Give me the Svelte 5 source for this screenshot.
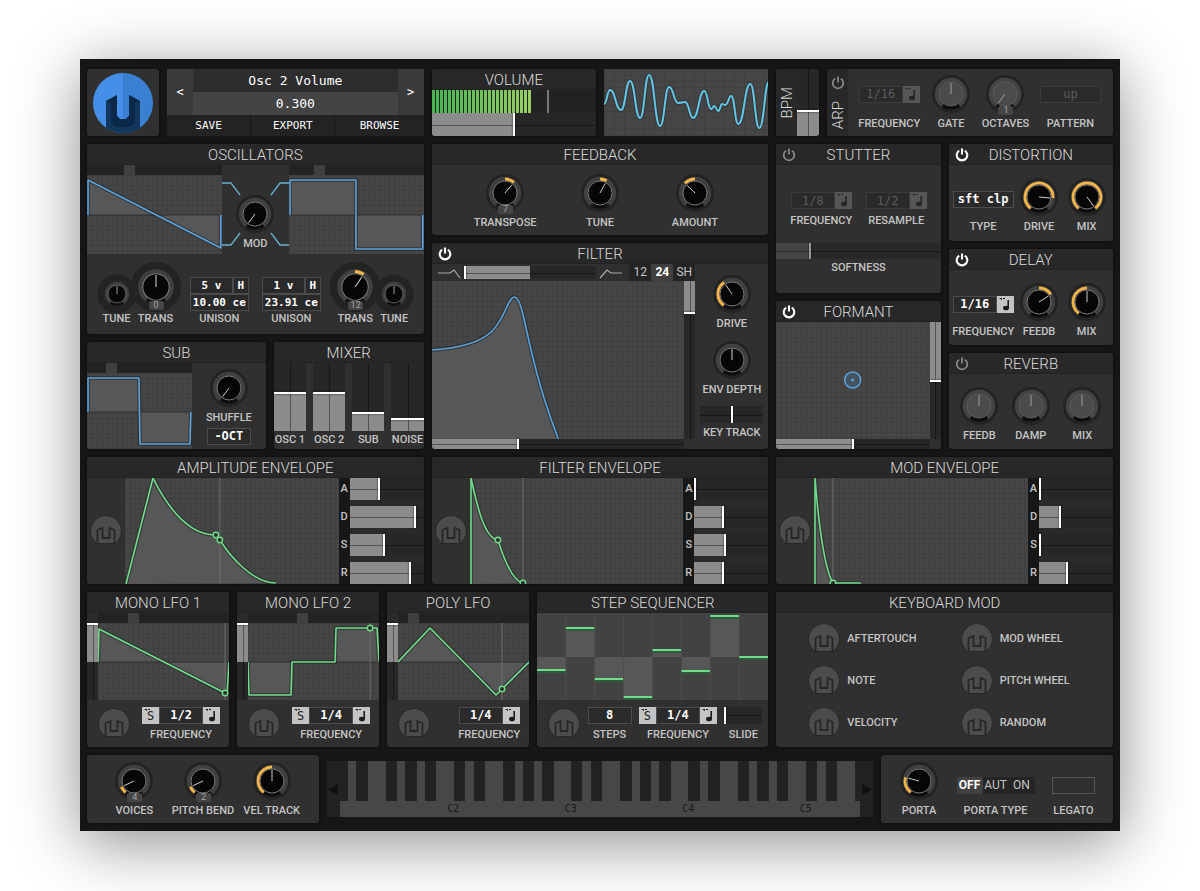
<script lang="ts">
  type Knob = { label: string; value: number; origin?: number; kind?: string; off?: boolean; badge?: string };
  type Slider = { label: string; value: number; from?: number };
  type Wave = {
    w: number;
    h: number;
    d: string;
    close?: string;
    mid?: number;
    play?: number;
    dots?: number[][];
    color?: string;
  };

  let knobs: Record<string, Knob> = $state({
    mod: { label: "MOD", value: 0 },
    tune1: { label: "TUNE", value: 0.5, origin: 0.5, kind: "small" },
    trans1: { label: "TRANS", value: 0.5, origin: 0.5, kind: "large", badge: "0" },
    trans2: { label: "TRANS", value: 0.62, origin: 0.5, kind: "large", badge: "12" },
    tune2: { label: "TUNE", value: 0.5, origin: 0.5, kind: "small" },
    shuffle: { label: "SHUFFLE", value: 0 },
    gate: { label: "GATE", value: 0.5, off: true },
    octaves: { label: "OCTAVES", value: 0, off: true, badge: "1" },
    filterDrive: { label: "DRIVE", value: 0.38 },
    envDepth: { label: "ENV DEPTH", value: 0.5, origin: 0.5 },
    distDrive: { label: "DRIVE", value: 0.83 },
    distMix: { label: "MIX", value: 1 },
    delayFeed: { label: "FEEDB", value: 0.7, origin: 0.5 },
    delayMix: { label: "MIX", value: 0.5 },
    porta: { label: "PORTA", value: 0.24 },
  });

  let feedback: Knob[] = $state([
    { label: "TRANSPOSE", value: 0.64, origin: 0.5, badge: "7" },
    { label: "TUNE", value: 0.6, origin: 0.5 },
    { label: "AMOUNT", value: 0.34, origin: 0.5 },
  ]);

  let reverb: Knob[] = $state([
    { label: "FEEDB", value: 0.5, off: true },
    { label: "DAMP", value: 0.5, off: true },
    { label: "MIX", value: 0.5, off: true },
  ]);

  let voice: Knob[] = $state([
    { label: "VOICES", value: 0.1, badge: "4" },
    { label: "PITCH BEND", value: 0.1, badge: "2" },
    { label: "VEL TRACK", value: 0.5 },
  ]);

  let sliders: Record<string, Slider> = $state({
    volume: { label: "Volume", value: 0.5 },
    bpm: { label: "BPM", value: 0.37 },
    wave1: { label: "Oscillator 1 wave", value: 0.3 },
    wave2: { label: "Oscillator 2 wave", value: 0.2 },
    subWave: { label: "Sub wave", value: 0.2 },
    blend: { label: "Filter blend", value: 0, from: 0.5 },
    resonance: { label: "Resonance", value: 0.8, from: 1 },
    cutoff: { label: "Cutoff", value: 0.34 },
    keyTrack: { label: "KEY TRACK", value: 0.5, from: 0.5 },
    softness: { label: "SOFTNESS", value: 0.2 },
    formantX: { label: "Formant X", value: 0.5 },
    formantY: { label: "Formant Y", value: 0.5, from: 1 },
    slide: { label: "SLIDE", value: 0 },
  });

  let mixer: Slider[] = $state([
    { label: "OSC 1", value: 0.56 },
    { label: "OSC 2", value: 0.56 },
    { label: "SUB", value: 0.26 },
    { label: "NOISE", value: 0.16 },
  ]);

  function adsr(values: number[]): Slider[] {
    return ["A", "D", "S", "R"].map((label, i) => ({ label, value: values[i] }));
  }

  let envelopes = $state([
    {
      title: "AMPLITUDE ENVELOPE",
      stages: adsr([0.4, 0.89, 0.46, 0.82]),
      wave: { w: 214, h: 106, d: "M1,106 L28,0 C42,28 62,57 91,57 L95,62 C105,78 128,105 151,105", play: 95, dots: [[91, 57], [95, 62]] } as Wave,
    },
    {
      title: "FILTER ENVELOPE",
      stages: adsr([0, 0.39, 0.41, 0.38]),
      wave: { w: 214, h: 106, d: "M1,106 L1,0 C8,32 15,60 28,62 C33,78 42,103 53,105", play: 53, dots: [[28, 62], [53, 105]] } as Wave,
    },
    {
      title: "MOD ENVELOPE",
      stages: adsr([0, 0.28, 0, 0.37]),
      wave: { w: 214, h: 106, d: "M1,106 L1,0 C5,50 10,90 19,105 L47,105", play: 19, dots: [[19, 105]] } as Wave,
    },
  ]);

  let lfos = $state([
    {
      title: "MONO LFO 1",
      sync: true,
      rate: "1/2",
      shape: { label: "Shape", value: 0.25 } as Slider,
      amp: { label: "Amplitude", value: 1, from: 0.5 } as Slider,
      wave: { w: 131, h: 77, d: "M0,39 L1,6 L127,70 L129,70 L131,39", mid: 39, play: 127, dots: [[127, 70]] } as Wave,
    },
    {
      title: "MONO LFO 2",
      sync: true,
      rate: "1/4",
      shape: { label: "Shape", value: 0.41 } as Slider,
      amp: { label: "Amplitude", value: 1, from: 0.5 } as Slider,
      wave: { w: 131, h: 77, d: "M0,39 L1,72 L43,72 L44,39 L87,39 L88,5 L129,5 L131,39", mid: 39, play: 122, dots: [[122, 5]] } as Wave,
    },
    {
      title: "POLY LFO",
      sync: false,
      rate: "1/4",
      shape: { label: "Shape", value: 0.08 } as Slider,
      amp: { label: "Amplitude", value: 1, from: 0.5 } as Slider,
      wave: { w: 131, h: 77, d: "M0,39 L32,5 L98,72 L131,39", mid: 39, play: 104, dots: [[104, 66]] } as Wave,
    },
  ]);

  const blue = "#5aa2dc";
  const osc1: Wave = { w: 135, h: 79, d: "M1,40 L1,5 L134,73 L134,40", mid: 40, color: blue };
  const osc2: Wave = { w: 135, h: 79, d: "M1,40 L1,5 L67,5 L67,74 L134,74 L134,40", mid: 40, color: blue };
  const sub: Wave = { w: 105, h: 76, d: "M1,39 L1,5 L52,5 L53,71 L103,71 L104,39", mid: 39, color: blue };
  const filter: Wave = {
    w: 252,
    h: 158,
    d: "M0,69 C30,67 50,60 60,50 C73,37 76,16 82,16 C89,16 92,42 100,74 C106,100 118,137 126,158",
    close: "L0,158 Z",
    color: blue,
  };

  const scope = smooth([
    [0, 35], [6, 21], [17, 41], [26, 12], [36, 49], [45, 6], [56, 57], [65, 18], [74, 34], [81, 33],
    [89, 49], [100, 22], [107, 40], [110, 37], [114, 42], [118, 35], [121, 36], [127, 27], [134, 55],
    [146, 15], [155, 59], [165, 12],
  ]);

  const steps = [57, 15, 66, 84, 37, 58, 3, 44];
  const modSources = ["AFTERTOUCH", "MOD WHEEL", "NOTE", "PITCH WHEEL", "VELOCITY", "RANDOM"];

  // 31 and a bit white keys, both ends cut off by the case
  const whiteKeys = Array.from({ length: 32 }, (_, i) => ({
    grow: i === 0 ? 0.25 : i === 31 ? 0.75 : 1,
    label: i % 7 === 0 && i > 0 ? "C" + (i / 7 + 1) : "",
  }));
  const octaveWidth = 117.5;
  const blackKeys = [0, 1, 2, 3, 4].flatMap((o) =>
    [9, 29, 58.5, 78, 97.5].map((x) => ((o * octaveWidth + x - 12.5) / 521) * 100)
  ).filter((x) => x < 100);

  let filterSlope = $state("24");
  let portaType = $state("OFF");
  let legato = $state(false);

  function smooth(points: number[][]): string {
    let d = `M${points[0]}`;
    for (let i = 1; i < points.length; i++) {
      const [x0, y0] = points[i - 1];
      const [x1, y1] = points[i];
      const mx = (x0 + x1) / 2;
      d += ` C${mx},${y0} ${mx},${y1} ${x1},${y1}`;
    }
    return d;
  }

  function polar(v: number, r: number): string {
    const a = ((v - 0.5) * 288 * Math.PI) / 180;
    return `${(Math.sin(a) * r).toFixed(2)},${(-Math.cos(a) * r).toFixed(2)}`;
  }

  function arc(from: number, to: number, r: number): string {
    const a = Math.min(from, to);
    const b = Math.max(from, to);
    return `M${polar(a, r)} A${r},${r} 0 ${(b - a) * 288 > 180 ? 1 : 0} 1 ${polar(b, r)}`;
  }

  function fillStyle(s: Slider, vertical: boolean): string {
    const from = s.from ?? 0;
    const start = Math.min(from, s.value) * 100;
    const size = Math.abs(s.value - from) * 100;
    return vertical ? `bottom:${start}%;height:${size}%` : `left:${start}%;width:${size}%`;
  }
</script>

{#snippet dial(k: Knob)}
  <span class="knob {k.kind ?? ''}" class:off={k.off}>
    <svg viewBox="-20 -20 40 40" aria-hidden="true">
      <circle class="back" r={k.kind === "large" ? 23 : k.kind === "small" ? 26 : 19} />
      <circle class="well" r="15.5" />
      <path class="ring" d={arc(0, 1, 14)} />
      {#if !k.off && k.value !== (k.origin ?? 0)}
        <path class="amount" d={arc(k.origin ?? 0, k.value, 14)} />
      {/if}
      <circle class="cap" r="12" />
      <path class="pointer" d="M0,0 L{polar(k.value, 11)}" />
    </svg>
    <input type="range" min="0" max="1" step="0.01" aria-label={k.label} bind:value={k.value} />
    {#if k.badge}<span class="badge">{k.badge}</span>{/if}
  </span>
{/snippet}

{#snippet knob(k: Knob)}
  <div class="field">
    <div class="control">{@render dial(k)}</div>
    <span class="caption">{k.label}</span>
  </div>
{/snippet}

{#snippet slider(s: Slider, kind: string)}
  <span class="slider {kind}">
    <span class="fill" style={fillStyle(s, kind.includes("vertical"))}></span>
    <span class="groove"></span>
    <span class="thumb" style="--v:{s.value}"></span>
    <input type="range" min="0" max="1" step="0.01" aria-label={s.label} bind:value={s.value} />
  </span>
{/snippet}

{#snippet wave(p: Wave)}
  <svg class="grid" viewBox="0 0 {p.w} {p.h}" preserveAspectRatio="none" aria-hidden="true">
    <path d="{p.d} {p.close ?? ''}" fill="#575757" />
    {#if p.mid}<path d="M0,{p.mid} H{p.w}" stroke="#303030" />{/if}
    {#if p.play}<path d="M{p.play},0 V{p.h}" stroke="#6e6e6e" />{/if}
    <path d={p.d} fill="none" stroke="#222" stroke-opacity="0.5" stroke-width="4" />
    <path d={p.d} fill="none" stroke={p.color ?? "#6fdc8c"} stroke-width="1.6" stroke-linejoin="round" />
    {#each p.dots ?? [] as [x, y]}
      <circle cx={x} cy={y} r="2.7" fill="#303030" stroke="#6fdc8c" stroke-width="1.4" />
    {/each}
  </svg>
{/snippet}

{#snippet power(name: string, on: boolean)}
  <button class="power" class:on aria-label="{name} power">
    <svg viewBox="0 0 14 14" width="14" height="14">
      <path d="M4.2,2.6 A5.3,5.3 0 1 0 9.8,2.6 M7,0.5 V6.6" fill="none" stroke="currentColor" stroke-width={on ? 2.1 : 1.7} />
    </svg>
  </button>
{/snippet}

{#snippet title(text: string, on?: boolean)}
  <header>
    <span>{#if on !== undefined}{@render power(text, on)}{/if}</span>
    <h2>{text}</h2>
  </header>
{/snippet}

{#snippet modButton(name: string)}
  <button class="mod" aria-label="Modulate with {name}">
    <svg viewBox="-16 -16 32 32">
      <path class="disc" d="M-9,12.5 A15.4,15.4 0 1 1 9,12.5 Z" />
      <path class="mark" d="M-8.5,12.5 V-1 L-3.5,-3 V7 H3.5 V-3 L8.5,-1 V12.5" />
    </svg>
  </button>
{/snippet}

{#snippet note()}
  <button class="icon" aria-label="Tempo mode">
    <svg viewBox="0 0 17 17">
      <path d="M2,2 H5 V4 Z M6,2 H8 V3 H6 Z" fill="currentColor" />
      <path d="M11.2,4 V12" stroke="currentColor" stroke-width="1.6" />
      <ellipse cx="9" cy="12" rx="3" ry="2.3" fill="currentColor" />
    </svg>
  </button>
{/snippet}

{#snippet tempo(value: string, label: string, sync: boolean, off: boolean)}
  <div class="field">
    <div class="control">
      <span class="tempo" class:off>
        {#if sync}
          <button class="icon" aria-label="Sync">
            <svg viewBox="0 0 17 17"><path d="M2,2 H5 V4 Z M6,2 H8 V3 H6 Z" fill="currentColor" /></svg>
            <span>S</span>
          </button>
        {/if}
        <input class="value" type="text" aria-label={label} {value} />
        {@render note()}
      </span>
    </div>
    <span class="caption">{label}</span>
  </div>
{/snippet}

<main>
  <div class="synth">
    <section class="row">
      <div class="patch-area">
        <div class="panel logo">
          <svg viewBox="0 0 62 62" role="img" aria-label="Logo">
            <defs><clipPath id="disc"><circle cx="31" cy="31" r="30" /></clipPath></defs>
            <g clip-path="url(#disc)">
              <path d="M0,0 H31 V62 H0 Z" fill="#4590e6" />
              <path d="M31,0 H62 V62 H31 Z" fill="#3a80d2" />
              <path d="M14,62 V29 L25,23 V44 L28,47 H34 L37,44 V23 L48,29 V62 Z" fill="#12365c" />
              <path d="M14,29 L25,23 V44 L28,47 H34 L37,44 V23 L48,29 L43,31 V51 L38,55 H24 L19,51 V31 Z" fill="#0c2848" />
            </g>
          </svg>
        </div>
        <div class="patch">
          <button class="arrow">&lt;</button>
          <div class="readout">
            <output>Osc 2 Volume</output>
            <output>0.300</output>
          </div>
          <button class="arrow">&gt;</button>
          <div class="actions">
            <button>SAVE</button>
            <button>EXPORT</button>
            <button>BROWSE</button>
          </div>
        </div>
      </div>

      <div class="halves">
        <div class="panel">
          {@render title("VOLUME")}
          <div class="meter"><div class="level"></div><div class="peak"></div></div>
          {@render slider(sliders.volume, "tall")}
        </div>
        <svg class="grid scope" viewBox="0 0 164 67" preserveAspectRatio="none" aria-hidden="true">
          <path d={scope} fill="none" stroke="#222" stroke-opacity="0.4" stroke-width="4" />
          <path d={scope} fill="none" stroke="#62c6e6" stroke-width="2" />
        </svg>
      </div>

      <div class="clock">
        <div class="panel side">
          <div class="side-title"><h2>BPM</h2></div>
          {@render slider(sliders.bpm, "vertical")}
        </div>
        <div class="panel side arp">
          <div class="side-title">{@render power("ARP", false)}<h2>ARP</h2></div>
          <div class="fields">
            {@render tempo("1/16", "FREQUENCY", false, true)}
            {@render knob(knobs.gate)}
            {@render knob(knobs.octaves)}
            <label class="field">
              <span class="control"><input class="value wide off" type="text" value="up" /></span>
              <span class="caption">PATTERN</span>
            </label>
          </div>
        </div>
      </div>
    </section>

    <section class="row">
      <div class="stack">
        <div class="panel">
          {@render title("OSCILLATORS")}
          <div class="oscillators">
            <div class="display">{@render slider(sliders.wave1, "tab")}{@render wave(osc1)}</div>
            <div class="cross">
              <svg viewBox="0 0 67 89" aria-hidden="true">
                <path d="M0,18 H9 L18,30 M67,18 H58 L49,30 M0,80 H9 L18,68 M67,80 H58 L49,68" fill="none" stroke="#68aecd" stroke-width="1.3" />
              </svg>
              {@render knob(knobs.mod)}
            </div>
            <div class="display">{@render slider(sliders.wave2, "tab")}{@render wave(osc2)}</div>
          </div>
          <div class="fields tuning">
            <div class="pair">{@render knob(knobs.tune1)}{@render knob(knobs.trans1)}</div>
            <div class="unisons">
              {#each [["5 v", "10.00 ce"], ["1 v", "23.91 ce"]] as [voices, detune]}
                <div class="field">
                  <div class="unison">
                    <input class="value" type="text" aria-label="Unison voices" value={voices} />
                    <button class="value">H</button>
                    <input class="value detune" type="text" aria-label="Unison detune" value={detune} />
                  </div>
                  <span class="caption">UNISON</span>
                </div>
              {/each}
            </div>
            <div class="pair">{@render knob(knobs.trans2)}{@render knob(knobs.tune2)}</div>
          </div>
        </div>
        <div class="sub-mixer">
          <div class="panel">
            {@render title("SUB")}
            <div class="sub">
              <div class="display">{@render slider(sliders.subWave, "tab")}{@render wave(sub)}</div>
              <div class="sub-side">
                {@render knob(knobs.shuffle)}
                <button class="value">-OCT</button>
              </div>
            </div>
          </div>
          <div class="panel">
            {@render title("MIXER")}
            <div class="mixer">
              {#each mixer as channel}
                <div class="channel">{@render slider(channel, "vertical")}<span class="caption">{channel.label}</span></div>
              {/each}
            </div>
          </div>
        </div>
      </div>

      <div class="stack">
        <div class="panel">
          {@render title("FEEDBACK")}
          <div class="fields even roomy">
            {#each feedback as k}{@render knob(k)}{/each}
          </div>
        </div>
        <div class="panel">
          {@render title("FILTER", true)}
          <div class="filter">
            <div class="filter-main">
              <div class="filter-top">
                <svg viewBox="0 0 24 13" width="24" height="13" aria-hidden="true"><path d="M1,7 H13 L17,4 L23,12" /></svg>
                {@render slider(sliders.blend, "")}
                <svg viewBox="0 0 24 13" width="24" height="13" aria-hidden="true"><path d="M1,12 L8,4 L12,7 H23" /></svg>
                <div class="options slope">
                  {#each ["12", "24", "SH"] as option}
                    <label><input type="radio" name="slope" value={option} bind:group={filterSlope} /><span>{option}</span></label>
                  {/each}
                </div>
              </div>
              <div class="pad">
                {@render wave(filter)}
                {@render slider(sliders.resonance, "vertical")}
                {@render slider(sliders.cutoff, "")}
              </div>
            </div>
            <div class="filter-side">
              {@render knob(knobs.filterDrive)}
              {@render knob(knobs.envDepth)}
              <div class="field">{@render slider(sliders.keyTrack, "free")}<span class="caption">KEY TRACK</span></div>
            </div>
          </div>
        </div>
      </div>

      <div class="halves">
        <div class="stack">
          <div class="panel">
            {@render title("STUTTER", false)}
            <div class="stutter">
              <div class="fields">
                {@render tempo("1/8", "FREQUENCY", false, true)}
                {@render tempo("1/2", "RESAMPLE", false, true)}
              </div>
              <div class="field">{@render slider(sliders.softness, "dim")}<span class="caption">SOFTNESS</span></div>
            </div>
          </div>
          <div class="panel">
            {@render title("FORMANT", true)}
            <div class="pad formant">
              <svg class="grid" viewBox="0 0 154 117" aria-hidden="true">
                <circle cx="77" cy="58" r="8" fill="#46627a" fill-opacity="0.5" stroke={blue} stroke-width="1.5" />
                <circle cx="77" cy="58" r="1.5" fill={blue} />
              </svg>
              {@render slider(sliders.formantY, "vertical")}
              {@render slider(sliders.formantX, "")}
            </div>
          </div>
        </div>
        <div class="stack effects">
          <div class="panel">
            {@render title("DISTORTION", true)}
            <div class="fields tight">
              <label class="field">
                <span class="control"><input class="value wide" type="text" value="sft clp" /></span>
                <span class="caption">TYPE</span>
              </label>
              {@render knob(knobs.distDrive)}
              {@render knob(knobs.distMix)}
            </div>
          </div>
          <div class="panel">
            {@render title("DELAY", true)}
            <div class="fields tight">
              {@render tempo("1/16", "FREQUENCY", false, false)}
              {@render knob(knobs.delayFeed)}
              {@render knob(knobs.delayMix)}
            </div>
          </div>
          <div class="panel">
            {@render title("REVERB", false)}
            <div class="fields even">
              {#each reverb as k}{@render knob(k)}{/each}
            </div>
          </div>
        </div>
      </div>
    </section>

    <section class="row">
      {#each envelopes as env}
        <div class="panel">
          {@render title(env.title)}
          <div class="envelope">
            {@render modButton(env.title)}
            {@render wave(env.wave)}
            <div class="stages">
              {#each env.stages as stage}
                <div class="stage"><span class="caption">{stage.label}</span>{@render slider(stage, "")}</div>
              {/each}
            </div>
          </div>
        </div>
      {/each}
    </section>

    <section class="row">
      <div class="lfos">
        {#each lfos as lfo}
          <div class="panel">
            {@render title(lfo.title)}
            <div class="lfo">
              <span class="corner"></span>
              {@render slider(lfo.shape, "tab")}
              {@render slider(lfo.amp, "vertical")}
              {@render wave(lfo.wave)}
            </div>
            <div class="lfo-bottom">
              {@render modButton(lfo.title)}
              {@render tempo(lfo.rate, "FREQUENCY", lfo.sync, false)}
            </div>
          </div>
        {/each}
        <div class="panel">
          {@render title("STEP SEQUENCER")}
          <svg class="steps" viewBox="0 0 232 87" preserveAspectRatio="none" aria-hidden="true">
            {#each steps as y, i}
              <rect x={i * 29} y={Math.min(y, 44)} width="29" height={Math.abs(y - 44)} fill="#575757" />
              <path d="M{i * 29},0 V87" stroke="#4e4e4e" />
              <path d="M{i * 29},{y + 1} H{i * 29 + 29}" stroke="#2f5a3c" stroke-width="4" />
              <path d="M{i * 29},{y} H{i * 29 + 29}" stroke="#6fdc8c" stroke-width="2" />
            {/each}
          </svg>
          <div class="lfo-bottom sequencer">
            {@render modButton("STEP SEQUENCER")}
            <label class="field">
              <span class="control"><input class="value count" type="text" value="8" /></span>
              <span class="caption">STEPS</span>
            </label>
            {@render tempo("1/4", "FREQUENCY", true, false)}
            <div class="field slide"><div class="control">{@render slider(sliders.slide, "free")}</div><span class="caption">SLIDE</span></div>
          </div>
        </div>
      </div>
      <div class="panel">
        {@render title("KEYBOARD MOD")}
        <div class="sources">
          {#each modSources as source}
            <div class="source">{@render modButton(source)}<span class="caption">{source}</span></div>
          {/each}
        </div>
      </div>
    </section>

    <section class="bottom">
      <div class="panel">
        <div class="fields even">
          {#each voice as k}{@render knob(k)}{/each}
        </div>
      </div>
      <div class="keyboard">
        <button class="shift" aria-label="Octave down"><svg viewBox="0 0 10 10"><path d="M9,0 V10 L0,5 Z" /></svg></button>
        <div class="keys">
          {#each whiteKeys as key}
            <button class="white" style="flex-grow:{key.grow}">{key.label}</button>
          {/each}
          {#each blackKeys as x}
            <button class="black" style="left:{x}%" aria-label="Black key"></button>
          {/each}
        </div>
        <button class="shift" aria-label="Octave up"><svg viewBox="0 0 10 10"><path d="M1,0 V10 L10,5 Z" /></svg></button>
      </div>
      <div class="panel">
        <div class="fields porta">
          {@render knob(knobs.porta)}
          <div class="field">
            <div class="control">
              <div class="options">
                {#each ["OFF", "AUT", "ON"] as option}
                  <label><input type="radio" name="porta" value={option} bind:group={portaType} /><span>{option}</span></label>
                {/each}
              </div>
            </div>
            <span class="caption">PORTA TYPE</span>
          </div>
          <label class="field">
            <span class="control"><input class="check" type="checkbox" bind:checked={legato} /></span>
            <span class="caption">LEGATO</span>
          </label>
        </div>
      </div>
    </section>
  </div>
</main>

<style>
  :global(body) {
    background: #fff;
  }

  main {
    padding: 59px 80px 60px;
    font-family: Roboto, sans-serif;
    color: #c4c4c4;
    overflow: hidden;
  }

  main :global(*) {
    box-sizing: border-box;
  }

  .synth {
    display: flex;
    flex-direction: column;
    gap: 8px;
    padding: 10px 7px 8px;
    background: #161616;
    box-shadow: 0 12px 60px rgba(0, 0, 0, 0.45);
  }

  .row,
  .halves {
    display: grid;
    grid-template-columns: repeat(3, minmax(0, 1fr));
    gap: 8px;
  }

  .halves {
    grid-template-columns: repeat(2, minmax(0, 1fr));
  }

  .stack {
    display: flex;
    flex-direction: column;
    justify-content: space-between;
    gap: 8px;
  }

  .panel {
    display: flex;
    flex-direction: column;
    background: #303030;
    border-radius: 3px;
    overflow: hidden;
    box-shadow: 0 0 3px #0a0a0a;
  }

  header {
    display: grid;
    grid-template-columns: 1fr auto 1fr;
    align-items: center;
    height: 21px;
    padding-top: 2px;
    background: #282828;
    border-bottom: 1px solid #222;
  }

  header > span {
    display: flex;
    padding-left: 6px;
  }

  h2 {
    margin: 0;
    font-size: 15px;
    font-weight: 300;
    line-height: 18px;
    color: #dadada;
    white-space: nowrap;
  }

  button,
  input {
    margin: 0;
    padding: 0;
    border: 0;
    border-radius: 0;
    background: none;
    color: inherit;
    font-family: "DejaVu Sans Mono", monospace;
    cursor: pointer;
  }

  svg {
    display: block;
  }

  .power {
    display: flex;
    color: #8a8a8a;
  }

  .power.on {
    color: #fff;
  }

  /* labelled controls */
  .fields {
    display: flex;
    justify-content: space-between;
    flex: 1;
    align-items: flex-end;
  }

  .field {
    display: flex;
    flex-direction: column;
    align-items: center;
    gap: 3px;
  }

  .control {
    display: flex;
    align-items: center;
    justify-content: center;
    height: 40px;
  }

  .caption {
    font-size: 11px;
    font-weight: 500;
    line-height: 14px;
    white-space: nowrap;
  }

  .even {
    padding: 6px 5px;
  }

  .even .field {
    flex: 1;
  }

  .roomy {
    padding: 8px 26px 5px;
  }

  .tight {
    gap: 3px;
    padding: 12px 4px 6px;
  }

  .tight .field {
    flex: 1;
  }

  .tight .field:first-child {
    flex: none;
    width: 61px;
  }

  .tight .field:first-child .control {
    padding-top: 4px;
  }

  .effects .panel:first-child .tight {
    padding-bottom: 7px;
  }

  .effects .even {
    padding-top: 12px;
  }

  /* knobs */
  .knob {
    position: relative;
    display: block;
    width: 40px;
    height: 40px;
  }

  .knob.small {
    width: 30px;
    height: 30px;
  }

  .knob.large {
    width: 44px;
    height: 44px;
  }

  .knob svg {
    width: 100%;
    height: 100%;
    overflow: visible;
  }

  .knob input {
    position: absolute;
    inset: 0;
    width: 100%;
    height: 100%;
    opacity: 0;
  }

  .back {
    fill: #232323;
  }

  .well {
    fill: #0e0e0e;
  }

  .ring {
    fill: none;
    stroke: #404040;
    stroke-width: 4.4;
  }

  .amount {
    fill: none;
    stroke: #f5b547;
    stroke-width: 2.8;
    stroke-linecap: butt;
  }

  .cap {
    fill: #060606;
    stroke: #777;
    stroke-width: 1;
  }

  .pointer {
    stroke: #ccc;
    stroke-width: 1;
  }

  .off .ring {
    stroke: #444;
  }

  .off .cap {
    fill: #4b4b4b;
    stroke: #5c5c5c;
  }

  .off .pointer {
    stroke: #a0a0a0;
  }

  .badge {
    position: absolute;
    left: 50%;
    bottom: -1px;
    width: 15px;
    margin-left: -7px;
    background: #454545;
    border-radius: 2px;
    color: #a4a4a4;
    font-size: 9px;
    line-height: 9px;
    text-align: center;
    pointer-events: none;
  }

  /* sliders */
  .slider {
    position: relative;
    display: block;
    width: 100%;
    height: 100%;
    background: #272727;
  }

  .slider input {
    position: absolute;
    inset: 0;
    width: 100%;
    height: 100%;
    opacity: 0;
  }

  .slider.vertical input {
    writing-mode: vertical-lr;
    direction: rtl;
  }

  .fill {
    position: absolute;
    top: 0;
    height: 100%;
    background: #8c8c8c;
  }

  .vertical > .fill {
    top: auto;
    width: 100%;
  }

  .groove {
    position: absolute;
    left: 0;
    top: 50%;
    width: 100%;
    height: 1px;
    background: rgba(0, 0, 0, 0.4);
  }

  .vertical > .groove {
    left: 50%;
    top: 0;
    width: 1px;
    height: 100%;
  }

  .thumb {
    position: absolute;
    left: calc(var(--v) * (100% - 2px));
    top: 0;
    width: 2px;
    height: 100%;
    background: #fff;
    box-shadow: 0 0 2px #111;
  }

  .vertical > .thumb {
    left: 0;
    top: auto;
    bottom: calc(var(--v) * (100% - 2px));
    width: 100%;
    height: 2px;
  }

  .slider.tab {
    height: 10px;
    background: #232323;
  }

  .tab > .fill,
  .tab > .groove {
    display: none;
  }

  .tab > .thumb {
    left: calc(var(--v) * (100% - 11px));
    width: 11px;
    background: #404040;
    box-shadow: none;
  }

  .slider.tall {
    height: 23px;
  }

  .slider.free {
    height: 17px;
  }

  .slider.dim {
    height: 16px;
    background: #282828;
  }

  .dim > .fill {
    background: #454545;
  }

  .dim > .thumb {
    background: #999;
  }

  /* value boxes */
  .value {
    width: 44px;
    height: 17px;
    border: 1px solid #4c4c4c;
    background: #2a2a2a;
    color: #fff;
    font-size: 12px;
    font-weight: 700;
    line-height: 15px;
    text-align: center;
  }

  .value.wide {
    width: 61px;
  }

  .tempo {
    display: flex;
  }

  .icon {
    position: relative;
    width: 17px;
    height: 17px;
    background: #c4c4c4;
    color: #1c1c1c;
  }

  .icon span {
    position: absolute;
    inset: 0;
    font-size: 12px;
    line-height: 18px;
  }

  .off .value,
  .value.off {
    border-color: #3a3a3a;
    color: #5c5c5c;
    font-weight: 400;
  }

  .off .icon {
    background: #565656;
    color: #262626;
  }

  .options {
    display: flex;
    background: #242424;
  }

  .options label {
    width: 26px;
    cursor: pointer;
  }

  .options input {
    position: absolute;
    opacity: 0;
  }

  .options span {
    display: block;
    font-size: 12px;
    line-height: 17px;
    text-align: center;
  }

  .options input:checked + span {
    background: #404040;
    color: #fff;
    font-weight: 700;
  }

  .check {
    appearance: none;
    width: 43px;
    height: 17px;
    border: 1px solid #555;
  }

  .check:checked {
    background: #8c8c8c;
  }

  /* displays */
  .grid {
    width: 100%;
    background-color: #464646;
    background-image: linear-gradient(to right, #404040 1px, transparent 1px),
      linear-gradient(to bottom, #404040 1px, transparent 1px);
    background-size: 5px 5px;
  }

  .mod {
    display: block;
    width: 32px;
    height: 32px;
  }

  .disc {
    fill: #4c4c4c;
    stroke: #282828;
  }

  .mark {
    fill: none;
    stroke: #262626;
    stroke-width: 1.8;
  }

  /* top row */
  .patch-area {
    display: grid;
    grid-template-columns: 72px minmax(0, 1fr);
    gap: 8px;
  }

  .logo {
    align-items: center;
    justify-content: center;
  }

  .logo svg {
    width: 62px;
    height: 62px;
  }

  .patch {
    display: grid;
    grid-template-columns: 26px minmax(0, 1fr) 26px;
    color: #fff;
  }

  .arrow {
    background: #3a3a3a;
    font-size: 12px;
  }

  .readout output {
    display: block;
    background: #2d2d2d;
    font-family: "DejaVu Sans Mono", monospace;
    font-size: 13px;
    line-height: 23px;
    text-align: center;
  }

  .readout output + output {
    background: #444;
  }

  .actions {
    grid-column: 1 / -1;
    display: grid;
    grid-template-columns: 84fr 84fr 89fr;
    gap: 1px;
  }

  .actions button {
    height: 21px;
    background: #232323;
    font-size: 11px;
  }

  .meter {
    display: flex;
    gap: 15px;
    height: 23px;
    background: #222;
  }

  .level {
    width: 61%;
    background: repeating-linear-gradient(to right, transparent 0 3px, #222 3px 4px),
      linear-gradient(to right, #45b550, #9ad066);
  }

  .peak {
    width: 2px;
    background: #777;
  }

  .scope {
    height: 67px;
    background-size: 10px 6px;
  }

  .clock {
    display: grid;
    grid-template-columns: 43px minmax(0, 1fr);
    gap: 8px;
  }

  .side {
    flex-direction: row;
  }

  .side-title {
    display: flex;
    flex-direction: column;
    align-items: center;
    justify-content: center;
    gap: 11px;
    flex: 0 0 21px;
    background: #282828;
  }

  .side-title h2 {
    writing-mode: vertical-rl;
    transform: rotate(180deg);
  }

  .arp .fields {
    padding: 0 12px 5px 10px;
  }

  /* oscillators */
  .oscillators {
    display: grid;
    grid-template-columns: minmax(0, 1fr) 67px minmax(0, 1fr);
  }

  .display .grid {
    height: 79px;
  }

  .cross {
    position: relative;
    padding-top: 29px;
  }

  .cross > svg {
    position: absolute;
    inset: 0;
  }

  .cross .field {
    position: relative;
  }

  .tuning {
    padding: 11px 10px 8px;
  }

  .pair {
    display: flex;
  }

  .pair .field {
    width: 39px;
  }

  .pair .control {
    height: 44px;
    align-items: flex-end;
  }

  .unisons {
    display: flex;
    gap: 13px;
  }

  .unisons .field {
    gap: 1px;
  }

  .unison {
    display: grid;
    grid-template-columns: 43px 16px;
  }

  .unison .value {
    width: 100%;
    font-size: 11px;
  }

  .unison .detune {
    grid-column: 1 / -1;
  }

  .sub-mixer {
    display: grid;
    grid-template-columns: 179fr 150fr;
    gap: 8px;
  }

  .sub {
    display: grid;
    grid-template-columns: minmax(0, 105fr) minmax(0, 74fr);
  }

  .sub .grid {
    height: 76px;
  }

  .sub-side {
    display: flex;
    flex-direction: column;
    align-items: center;
    gap: 3px;
    padding-top: 5px;
  }

  .mixer {
    display: grid;
    grid-template-columns: repeat(4, minmax(0, 1fr));
    gap: 7px;
    flex: 1;
  }

  .channel {
    display: flex;
    flex-direction: column;
    align-items: center;
    gap: 2px;
    padding-bottom: 2px;
  }

  .channel .slider {
    flex: 1;
  }

  /* filter */
  .filter {
    display: grid;
    grid-template-columns: minmax(0, 1fr) 73px;
  }

  .filter-top {
    display: flex;
    align-items: center;
    gap: 3px;
    height: 17px;
    padding-left: 5px;
  }

  .filter-top svg {
    flex: none;
  }

  .filter-top path {
    fill: none;
    stroke: #aaa;
    stroke-width: 1.2;
  }

  .filter-top .slider {
    height: 13px;
  }

  .slope {
    flex: none;
    margin-left: 3px;
  }

  .slope label {
    width: 22px;
  }

  .pad {
    display: grid;
    grid-template-columns: minmax(0, 1fr) 11px;
    grid-template-rows: 158px 10px;
  }

  .pad .grid {
    height: 100%;
  }

  .formant {
    grid-template-rows: 117px 10px;
  }

  .filter-side {
    display: flex;
    flex-direction: column;
    gap: 9px;
    padding: 10px 5px 0;
  }

  /* effects */
  .stutter .fields {
    padding: 16px 14px 15px;
  }

  .stutter .fields .field {
    gap: 5px;
  }

  .stutter .control {
    height: 28px;
    align-items: flex-end;
  }

  .stutter > .field {
    gap: 2px;
    padding-bottom: 18px;
  }

  /* envelopes */
  .envelope {
    display: grid;
    grid-template-columns: 38px minmax(0, 1fr) 85px;
    align-items: center;
  }

  .envelope > .mod {
    margin: auto;
  }

  .envelope .grid {
    height: 106px;
  }

  .stages {
    display: flex;
    flex-direction: column;
    justify-content: space-between;
    height: 106px;
    background: linear-gradient(to right, #171717 11px, #2a2a2a 11px);
  }

  .stage {
    display: grid;
    grid-template-columns: 11px minmax(0, 1fr);
    align-items: center;
    height: 22px;
  }

  .stage .caption {
    text-align: center;
  }

  /* modulators */
  .lfos {
    grid-column: span 2;
    display: grid;
    grid-template-columns: 142fr 142fr 142fr 231fr;
    gap: 8px;
  }

  .lfo {
    display: grid;
    grid-template-columns: 11px minmax(0, 1fr);
    grid-template-rows: 10px 77px;
  }

  .corner {
    background: #2b2b2b;
  }

  .lfo .grid {
    height: 77px;
  }

  .lfo-bottom {
    display: flex;
    justify-content: space-between;
    padding: 6px 9px 5px 11px;
  }

  .lfo-bottom .mod {
    margin-top: 2px;
  }

  .lfo-bottom .control {
    height: 18px;
  }

  .lfo-bottom .field {
    gap: 4px;
  }

  .sequencer {
    padding-right: 6px;
  }

  .slide {
    width: 38px;
  }

  .slide .control {
    width: 100%;
  }

  .steps {
    width: 100%;
    height: 87px;
    background: #424242;
  }

  .sources {
    display: grid;
    grid-template-columns: 1fr 1fr;
    flex: 1;
    padding: 5px 0 3px 32px;
  }

  .source {
    display: flex;
    align-items: center;
    gap: 7px;
  }

  /* bottom row */
  .bottom {
    display: grid;
    grid-template-columns: 232fr 546fr 232fr;
    gap: 8px;
  }

  .bottom .even {
    padding: 6px 13px 5px;
  }

  .porta {
    padding: 6px 18px 5px;
  }

  .porta .field:not(:first-child) .control {
    padding-top: 8px;
  }

  .keyboard {
    display: flex;
    margin: 6px 0;
    background: #222;
  }

  .shift {
    flex: none;
    width: 13px;
    padding: 1px;
    fill: #111;
  }

  .keys {
    position: relative;
    display: flex;
    flex: 1;
    overflow: hidden;
  }

  .white {
    flex: 1 1 0;
    min-width: 0;
    padding-top: 39px;
    background: #474747;
    color: #1a1a1a;
    font-size: 10px;
    line-height: 17px;
  }

  .black {
    position: absolute;
    top: 0;
    width: 2.2%;
    height: 40px;
    background: #222;
  }
</style>
